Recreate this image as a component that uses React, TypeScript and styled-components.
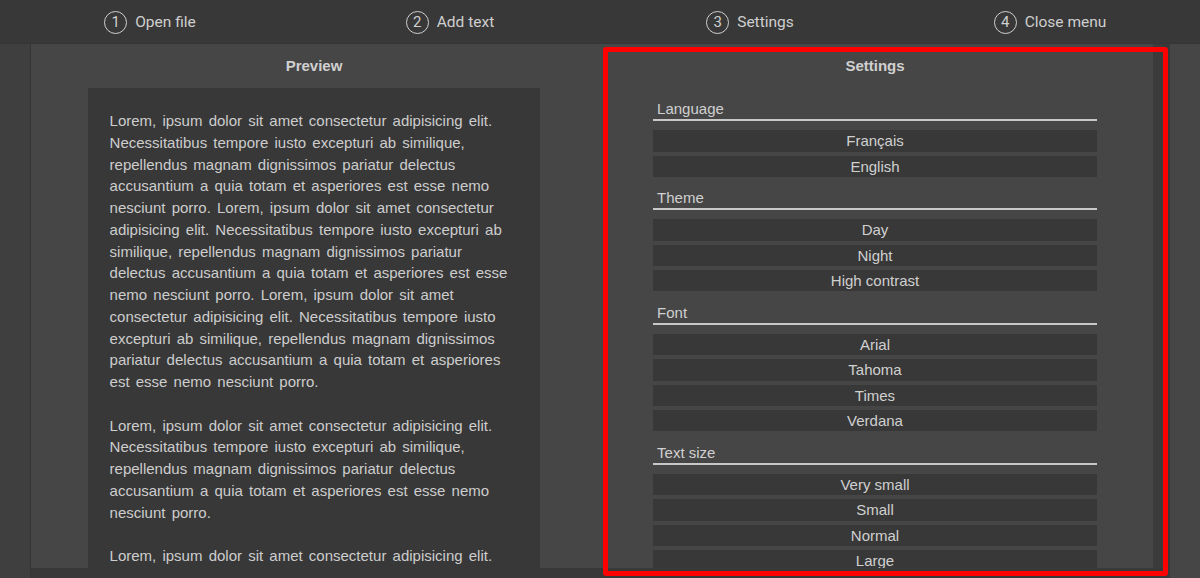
import React from "react";
import styled, { createGlobalStyle } from "styled-components";

const GlobalStyle = createGlobalStyle`
  html, body { margin: 0; padding: 0; }
  body {
    background: #383838;
    width: 1200px;
    height: 578px;
    overflow: hidden;
    font-family: "Liberation Sans", Arial, sans-serif;
    color: #d2d2d2;
  }
`;

const Page = styled.div`
  display: flex;
  flex-direction: column;
  width: 1200px;
  height: 578px;
  position: relative;
`;

const Nav = styled.nav`
  display: grid;
  grid-template-columns: repeat(4, 1fr);
  height: 43px;
  background: #383838;
  border-bottom: 1px solid #353535;
`;

const NavItem = styled.div`
  display: flex;
  align-items: center;
  justify-content: center;
  gap: 8px;
  font-family: Roboto, "Liberation Sans", sans-serif;
  font-size: 15.5px;
  color: #cfcfcf;
  padding-top: 1px;
`;

const StepCircle = styled.span`
  width: 21px;
  height: 21px;
  border: 1.5px solid #cfcfcf;
  border-radius: 50%;
  display: flex;
  align-items: center;
  justify-content: center;
  font-size: 15px;
`;

const Body = styled.div`
  display: flex;
  flex: 1;
  min-height: 0;
`;

const Gutter = styled.div<{ $side: "left" | "right" }>`
  width: 30px;
  background: ${(p) => (p.$side === "left" ? "#3f3f3f" : "#464646")};
  border-right: ${(p) => (p.$side === "left" ? "1px solid #353535" : "none")};
  flex-shrink: 0;
`;

const Main = styled.main`
  display: grid;
  grid-template-columns: 566px 566px;
  height: 524px;
  background: #464646;
  flex-shrink: 0;
`;

const Divider = styled.div`
  width: 7px;
  background: #393939;
  flex-shrink: 0;
`;

const Column = styled.section<{ $scroll?: boolean }>`
  display: flex;
  flex-direction: column;
  align-items: center;
  overflow: hidden;
  min-height: 0;
  ${(p) =>
    p.$scroll &&
    `
    padding-right: 10px;
    background: linear-gradient(to left, #3b3b3b 10px, transparent 10px);
  `}
`;

const Heading = styled.h2`
  margin: 0;
  height: 44px;
  line-height: 44px;
  font-size: 15px;
  font-weight: bold;
  color: #d0d0d0;
  text-align: center;
  flex-shrink: 0;
`;

const PreviewBox = styled.div`
  width: 80%;
  box-sizing: border-box;
  background: #383838;
  padding: 22px 22px;
  flex: 1;
  overflow: hidden;
`;

const Para = styled.p`
  margin: 0 0 21.75px;
  font-size: 15px;
  line-height: 21.75px;
  word-spacing: 2px;
  color: #cdcdcd;
`;

const SettingsList = styled.div`
  width: 80%;
  display: flex;
  flex-direction: column;
  padding-top: 12px;
`;

const Group = styled.div`
  display: flex;
  flex-direction: column;
  gap: 4px;
  margin-bottom: 12.3px;
`;

const GroupLabel = styled.div`
  font-size: 15px;
  line-height: 17.25px;
  padding: 0 4.5px 2px;
  border-bottom: 2px solid #c8c8c8;
  color: #d0d0d0;
  margin-bottom: 5px;
`;

const Option = styled.button`
  display: block;
  width: 100%;
  border: none;
  background: #383838;
  color: #d0d0d0;
  font-family: "Liberation Sans", Arial, sans-serif;
  font-size: 15px;
  line-height: 17.33px;
  padding: 2px 0;
  text-align: center;
`;

const Highlight = styled.div`
  position: absolute;
  left: 603px;
  top: 47px;
  width: 565px;
  height: 529px;
  box-sizing: border-box;
  border: 5px solid #ff0000;
  border-radius: 3px;
  pointer-events: none;
`;

const steps = ["Open file", "Add text", "Settings", "Close menu"];

const lorem =
  "Lorem, ipsum dolor sit amet consectetur adipisicing elit. Necessitatibus tempore iusto excepturi ab similique, repellendus magnam dignissimos pariatur delectus accusantium a quia totam et asperiores est esse nemo nesciunt porro.";

const groups: { label: string; options: string[] }[] = [
  { label: "Language", options: ["Français", "English"] },
  { label: "Theme", options: ["Day", "Night", "High contrast"] },
  { label: "Font", options: ["Arial", "Tahoma", "Times", "Verdana"] },
  { label: "Text size", options: ["Very small", "Small", "Normal", "Large"] },
];

export default function App() {
  return (
    <>
      <GlobalStyle />
      <Page>
        <Nav>
          {steps.map((s, i) => (
            <NavItem key={s}>
              <StepCircle>{i + 1}</StepCircle>
              <span>{s}</span>
            </NavItem>
          ))}
        </Nav>
        <Body>
          <Gutter $side="left" />
          <Main>
            <Column>
              <Heading>Preview</Heading>
              <PreviewBox>
                <Para>{[lorem, lorem, lorem].join(" ")}</Para>
                <Para>{lorem}</Para>
                <Para>{[lorem, lorem, lorem].join(" ")}</Para>
              </PreviewBox>
            </Column>
            <Column $scroll>
              <Heading>Settings</Heading>
              <SettingsList>
                {groups.map((g) => (
                  <Group key={g.label}>
                    <GroupLabel>{g.label}</GroupLabel>
                    {g.options.map((o) => (
                      <Option key={o}>{o}</Option>
                    ))}
                  </Group>
                ))}
              </SettingsList>
            </Column>
          </Main>
          <Divider />
          <Gutter $side="right" />
        </Body>
        <Highlight />
      </Page>
    </>
  );
}
